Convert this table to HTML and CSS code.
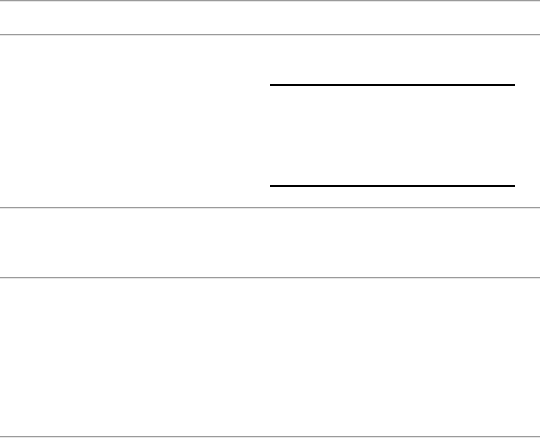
FILE: index.html
```html
<!DOCTYPE html>
<html lang="en">
<head>
<meta charset="utf-8">
<title>Page</title>
<link rel="stylesheet" href="styles.css">
</head>
<body>
<div class="page">
  <div class="rule"></div>
  <section class="sec sec-head"></section>
  <div class="rule"></div>
  <section class="sec sec-form">
    <div class="col-left"></div>
    <div class="col-right">
      <div class="field"></div>
      <div class="field"></div>
    </div>
  </section>
  <div class="rule"></div>
  <section class="sec sec-mid"></section>
  <div class="rule"></div>
  <section class="sec sec-body"></section>
  <div class="rule"></div>
</div>
</body>
</html>
```

FILE: styles.css
```css
html, body {
  margin: 0;
  padding: 0;
  background: #ffffff;
  font-family: "Liberation Sans", Arial, sans-serif;
}

.page {
  display: flex;
  flex-direction: column;
  width: 540px;
}

.rule {
  height: 0;
  border-top: 1px solid #9a9a9a;
  border-bottom: 1px solid #e6e6e6;
}

.sec-head {
  height: 32px;
}

.sec-form {
  height: 171px;
  display: grid;
  grid-template-columns: 270px 1fr;
}

.col-right {
  display: flex;
  flex-direction: column;
  padding: 48px 25px 0 0;
  gap: 99px;
}

.field {
  height: 0;
  border-top: 2px solid #000000;
}

.sec-mid {
  height: 68px;
}

.sec-body {
  height: 157px;
}
```
